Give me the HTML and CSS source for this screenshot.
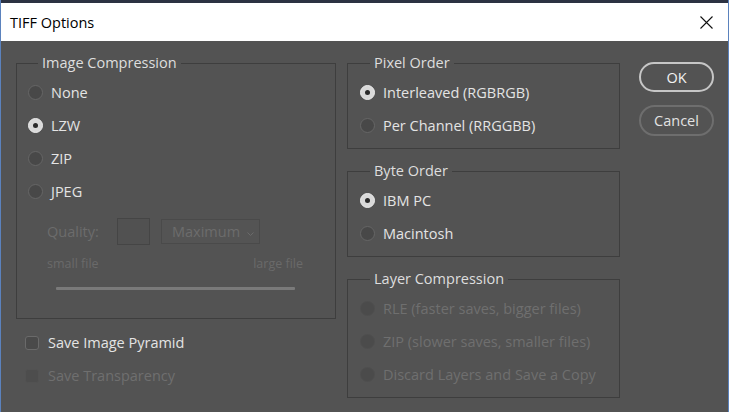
FILE: index.html
```html
<!DOCTYPE html>
<html>
<head>
<meta charset="utf-8">
<link rel="stylesheet" href="styles.css">
</head>
<body>
<div class="window">
  <div class="topstrip"></div>
  <div class="titlebar">
    <span class="title">TIFF Options</span>
    <svg class="close" width="13" height="13" viewBox="0 0 13 13"><path d="M0.5 0.5 L12.5 12.5 M12.5 0.5 L0.5 12.5" stroke="#111" stroke-width="1.1" fill="none"/></svg>
  </div>
  <div class="content">
    <div class="col-left">
      <fieldset class="group g-image">
        <legend>Image Compression</legend>
        <div class="opt"><span class="radio"></span><span class="lbl">None</span></div>
        <div class="opt"><span class="radio on"></span><span class="lbl">LZW</span></div>
        <div class="opt"><span class="radio"></span><span class="lbl">ZIP</span></div>
        <div class="opt"><span class="radio"></span><span class="lbl">JPEG</span></div>
        <div class="quality">
          <span class="q-label">Quality:</span>
          <span class="q-input"></span>
          <span class="q-select"><span>Maximum</span><svg class="chev" width="7" height="4" viewBox="0 0 7 4"><path d="M0.5 0.5 L3.5 3.5 L6.5 0.5" stroke="#6a6a6a" stroke-width="1" fill="none"/></svg></span>
        </div>
        <div class="sizes"><span>small file</span><span>large file</span></div>
        <div class="slider"></div>
      </fieldset>
      <div class="check-row"><span class="check"></span><span class="lbl">Save Image Pyramid</span></div>
      <div class="check-row disabled"><span class="check"></span><span class="lbl">Save Transparency</span></div>
    </div>
    <div class="col-right">
      <fieldset class="group g-small">
        <legend>Pixel Order</legend>
        <div class="opt"><span class="radio on"></span><span class="lbl">Interleaved (RGBRGB)</span></div>
        <div class="opt"><span class="radio"></span><span class="lbl">Per Channel (RRGGBB)</span></div>
      </fieldset>
      <fieldset class="group g-small">
        <legend>Byte Order</legend>
        <div class="opt"><span class="radio on"></span><span class="lbl">IBM PC</span></div>
        <div class="opt"><span class="radio"></span><span class="lbl">Macintosh</span></div>
      </fieldset>
      <fieldset class="group g-layer">
        <legend>Layer Compression</legend>
        <div class="opt disabled"><span class="radio"></span><span class="lbl">RLE (faster saves, bigger files)</span></div>
        <div class="opt disabled"><span class="radio"></span><span class="lbl">ZIP (slower saves, smaller files)</span></div>
        <div class="opt disabled"><span class="radio"></span><span class="lbl">Discard Layers and Save a Copy</span></div>
      </fieldset>
    </div>
    <div class="buttons">
      <div class="btn ok">OK</div>
      <div class="btn cancel">Cancel</div>
    </div>
  </div>
</div>
</body>
</html>
```

FILE: styles.css
```css
* { box-sizing: border-box; }
html, body { margin: 0; padding: 0; }
body {
  width: 729px;
  height: 412px;
  overflow: hidden;
  font-family: "Open Sans", "Noto Sans", "Liberation Sans", sans-serif;
  font-size: 14.5px;
  background: #535353;
}
.window {
  width: 729px;
  height: 412px;
  display: flex;
  flex-direction: column;
  border-left: 1px solid #5b82bd;
  border-right: 1px solid #5b82bd;
  background: #535353;
}
.topstrip {
  height: 3px;
  background: #2c3242;
  flex: none;
}
.titlebar {
  height: 38px;
  flex: none;
  background: #ffffff;
  display: flex;
  align-items: center;
  justify-content: space-between;
  padding: 0 15px 0 9px;
}
.title {
  color: #000;
  font-size: 14.5px;
  margin-top: 1px;
}
.close { display: block; margin-top: 1px; }
.content {
  flex: 1;
  display: flex;
  padding: 13px 0 0 15px;
  color: #e4e4e4;
}
.col-left { width: 320px; flex: none; }
.col-right {
  width: 273px;
  flex: none;
  margin-left: 11px;
  display: flex;
  flex-direction: column;
  gap: 13px;
}
.group {
  margin: 0;
  padding: 4px 0 0 11px;
  border: 1px solid #3e3e3e;
  min-width: 0;
}
.group legend {
  padding: 0 4px;
  margin-left: 10px;
  line-height: 18px;
  color: #dedede;
}
.g-image { height: 265px; }
.col-right .group { padding-left: 12px; }
.col-right .group legend { margin-left: 10px; }
.g-small { height: 95px; }
.g-layer { height: 128px; }
.opt {
  height: 33px;
  display: flex;
  align-items: center;
}
.radio {
  width: 15px;
  height: 15px;
  border-radius: 50%;
  background: #484848;
  border: 1px solid #666666;
  flex: none;
  margin-right: 8px;
  position: relative;
}
.radio.on {
  background: #d9d9d9;
  border-color: #ececec;
}
.radio.on::after {
  content: "";
  position: absolute;
  left: 4px;
  top: 4px;
  width: 5px;
  height: 5px;
  border-radius: 50%;
  background: #2a2a2a;
}
.opt.disabled .radio {
  background: #4b4b4b;
  border-color: #4f4f4f;
}
.disabled .lbl { color: #6f6f6f; }
.quality {
  display: flex;
  align-items: center;
  height: 27px;
  margin-top: 10px;
  margin-left: 19px;
  color: #6c6c6c;
}
.q-label { width: 70px; }
.q-input {
  width: 33px;
  height: 27px;
  background: #515151;
  border: 1px solid #454545;
}
.q-select {
  width: 99px;
  height: 25px;
  margin-left: 11px;
  border: 1px solid #4a4a4a;
  background: #545454;
  display: flex;
  align-items: center;
  justify-content: space-between;
  padding: 0 5px 0 10px;
  color: #6c6c6c;
}
.chev { display: block; margin-top: 4px; }
.sizes {
  display: flex;
  justify-content: space-between;
  width: 256px;
  margin-left: 19px;
  margin-top: 11px;
  font-size: 12.5px;
  line-height: 16px;
  color: #6a6a6a;
}
.slider {
  width: 239px;
  height: 3px;
  margin-left: 28px;
  margin-top: 15px;
  background: #7a7a7a;
  border-radius: 1px;
}
.check-row {
  height: 33px;
  margin-top: 7px;
  padding-left: 9px;
  display: flex;
  align-items: center;
}
.check-row + .check-row { margin-top: 0; }
.check {
  width: 14px;
  height: 14px;
  border-radius: 3px;
  background: #4a4a4a;
  border: 1px solid #6a6a6a;
  margin-right: 9px;
  flex: none;
}
.check-row.disabled .check {
  background: #4d4d4d;
  border-color: #525252;
}
.buttons {
  margin-left: 19px;
  padding-top: 8px;
  display: flex;
  flex-direction: column;
  gap: 13px;
}
.btn {
  width: 75px;
  height: 30px;
  border-radius: 16px;
  display: flex;
  align-items: center;
  justify-content: center;
  color: #f2f2f2;
}
.btn.ok { border: 2px solid #c6c6c6; }
.btn.cancel { border: 2px solid #6e6e6e; height: 31px; color: #e2e2e2; }
```
